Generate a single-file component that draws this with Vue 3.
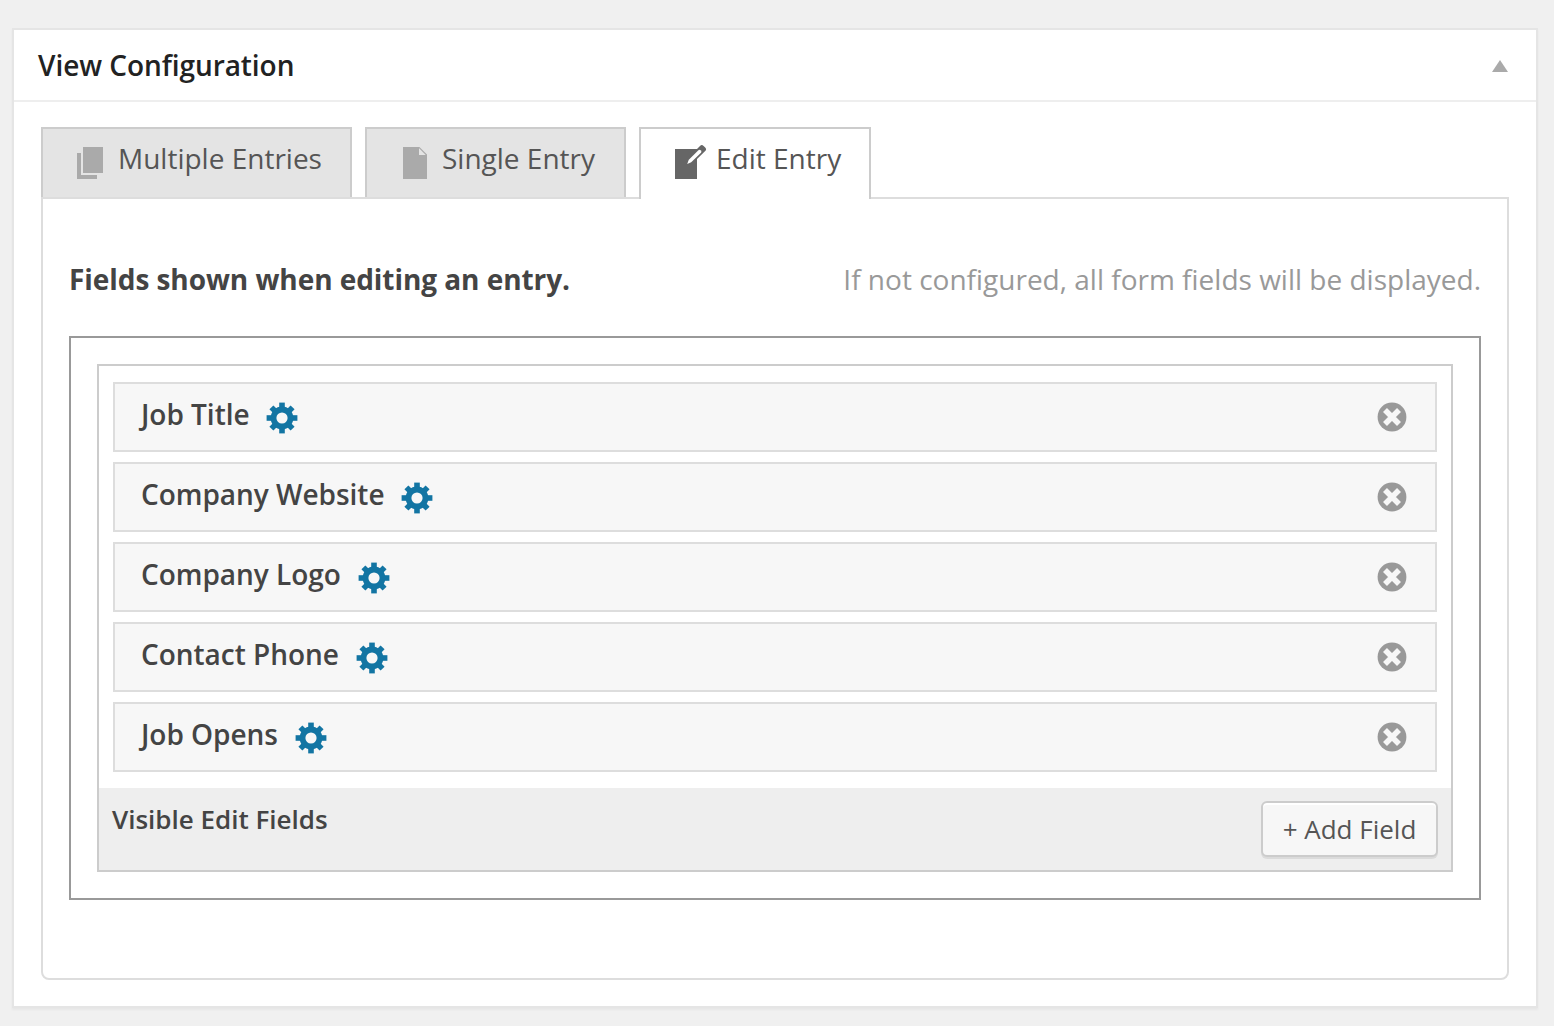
<script setup>
const tabs = [
  { id: 'multiple', label: 'Multiple Entries' },
  { id: 'single', label: 'Single Entry' },
  { id: 'edit', label: 'Edit Entry', active: true },
]
const fields = ['Job Title', 'Company Website', 'Company Logo', 'Contact Phone', 'Job Opens']
const teeth = [0, 90, 180, 270]
const diagonalTeeth = [45, 135, 225, 315]
</script>

<template>
  <main class="page">
    <section class="metabox">
      <header class="metabox-head">
        <h2>View Configuration</h2>
        <svg class="toggle" width="16" height="12" viewBox="0 0 16 12"><path d="M8 0 16 12H0Z" /></svg>
      </header>
      <div class="inside">
        <nav class="tabs">
          <a v-for="tab in tabs" :key="tab.id" class="tab" :class="[tab.id, { active: tab.active }]">
            <svg v-if="tab.id === 'multiple'" width="26" height="32" viewBox="0 0 26 32">
              <path d="M6 0H26V26H6ZM0 6H4V28H20V32H0Z" />
            </svg>
            <svg v-else-if="tab.id === 'single'" width="24" height="32" viewBox="0 0 24 32">
              <path d="M0 0H16V8H24V32H0Z" />
              <path d="M15.6 0H16.4L24 7.600V8.400H23.200L15.600 .8Z" />
            </svg>
            <svg v-else width="32" height="34" viewBox="0 0 32 34">
              <path d="M0 4H22V34H0Z" />
              <path d="M21 5 25 .9Q26.800-.8 28.600.9L30.200 2.500Q32 4.300 30.200 6.100L21 15Z" />
              <path class="pencil-body" d="M12.200 19 13.800 14.800 23.400 5.200Q24.700 4.200 25.900 5.400 27 6.600 26 7.800L16.200 17.200Z" />
            </svg>
            <span>{{ tab.label }}</span>
          </a>
        </nav>
        <div class="tab-panel">
          <div class="intro">
            <h4>Fields shown when editing an entry.</h4>
            <p>If not configured, all form fields will be displayed.</p>
          </div>
          <div class="zone">
            <div class="area">
              <ul class="fields">
                <li v-for="field in fields" :key="field" class="field">
                  <span class="field-name">{{ field }}</span>
                  <svg class="gear" width="32" height="32" viewBox="-16 -16 32 32">
                    <rect v-for="angle in teeth" :key="angle" x="-2.8" y="-15.4" width="5.6" height="8" :transform="`rotate(${angle})`" />
                    <rect v-for="angle in diagonalTeeth" :key="angle" x="-2.8" y="-15" width="5.6" height="8" :transform="`rotate(${angle})`" />
                    <circle r="8.500" />
                  </svg>
                  <svg class="remove" width="30" height="30" viewBox="-15 -15 30 30">
                    <circle r="14.400" />
                    <path d="M-7-7 7 7M7-7-7 7" />
                  </svg>
                </li>
              </ul>
              <footer class="area-foot">
                <h5>Visible Edit Fields</h5>
                <button type="button">+ Add Field</button>
              </footer>
            </div>
          </div>
        </div>
      </div>
    </section>
  </main>
</template>

<style>
body {
  margin: 0;
  background: #f0f0f0;
}
</style>

<style scoped>
* {
  box-sizing: border-box;
}
.page {
  height: 1026px;
  padding: 28px 16px 18px 12px;
  font-family: "Open Sans", sans-serif;
  color: #444;
}
h2, h4, h5, p, ul {
  margin: 0;
  padding: 0;
}
.metabox {
  height: 980px;
  background: #fff;
  border: 2px solid #e5e5e5;
  box-shadow: 0 2px 2px rgba(0, 0, 0, .04);
}
.metabox-head {
  display: flex;
  justify-content: space-between;
  align-items: center;
  height: 72px;
  padding: 0 28px 0 24px;
  border-bottom: 2px solid #eee;
}
h2 {
  font-size: 28px;
  font-weight: 600;
  line-height: 40px;
  letter-spacing: -.06px;
  color: #222;
}
.toggle {
  margin-top: 2px;
  fill: #aaa;
}
.inside {
  padding: 25px 27px;
}
.tabs {
  display: flex;
  gap: 13px;
}
.tab {
  position: relative;
  display: flex;
  height: 70px;
  background: #e4e4e4;
  border: 2px solid #ccc;
  border-bottom: 0;
  font-size: 28px;
  line-height: 38px;
  color: #555;
  white-space: nowrap;
}
.tab svg {
  flex: none;
  fill: #aaa;
}
.tab span {
  margin-top: 10px;
}
.multiple { width: 311px; padding-left: 34px; }
.multiple svg { margin: 18px 15px 0 0; }
.single { width: 261px; padding-left: 36px; }
.single svg { margin: 18px 15px 0 0; }
.edit { width: 232px; padding-left: 34px; }
.edit svg { margin: 16px 9px 0 0; }
.tab.active {
  height: 72px;
  margin-bottom: -2px;
  background: #fff;
  z-index: 1;
}
.tab.active svg {
  fill: #666;
}
.tab.active .pencil-body {
  fill: #fff;
}
.tab-panel {
  height: 783px;
  padding: 60px 26px 0;
  border: 2px solid #ddd;
  border-radius: 0 0 8px 8px;
}
.intro {
  display: flex;
  justify-content: space-between;
  height: 77px;
  line-height: 40px;
  white-space: nowrap;
}
h4 {
  font-size: 28px;
  font-weight: 700;
  letter-spacing: -.06px;
}
.intro p {
  font-size: 28px;
  color: #999;
}
.zone {
  height: 564px;
  padding: 26px;
  border: 2px solid #999;
}
.area {
  height: 508px;
  border: 2px solid #ccc;
}
.fields {
  display: flex;
  flex-direction: column;
  gap: 10px;
  height: 422px;
  padding: 16px 14px;
  list-style: none;
}
.field {
  display: flex;
  align-items: flex-start;
  height: 70px;
  padding: 0 28px 0 26px;
  background: #f7f7f7;
  border: 2px solid #ddd;
}
.field-name {
  margin-top: 10px;
  font-size: 28px;
  font-weight: 600;
  line-height: 40px;
  letter-spacing: -.03px;
  white-space: nowrap;
}
.gear {
  margin: 18px 0 0 16.700px;
  fill: #1375a3;
}
.gear circle {
  fill: none;
  stroke: #1375a3;
  stroke-width: 5.800px;
}
.remove {
  margin: 18px 0 0 auto;
  fill: #999;
}
.remove path {
  fill: none;
  stroke: #f7f7f7;
  stroke-width: 5.600px;
}
.area-foot {
  display: flex;
  justify-content: space-between;
  align-items: flex-start;
  height: 82px;
  padding: 13px 13px 0;
  background: #eee;
}
h5 {
  font-size: 26px;
  font-weight: 600;
  line-height: 36px;
}
button {
  width: 177px;
  height: 56px;
  padding: 0;
  border: 2px solid #ccc;
  border-radius: 6px;
  background: #f7f7f7;
  box-shadow: inset 0 2px 0 #fff, 0 2px 0 rgba(0, 0, 0, .08);
  font: 26px/52px "Open Sans", sans-serif;
  color: #555;
  white-space: nowrap;
}
</style>
